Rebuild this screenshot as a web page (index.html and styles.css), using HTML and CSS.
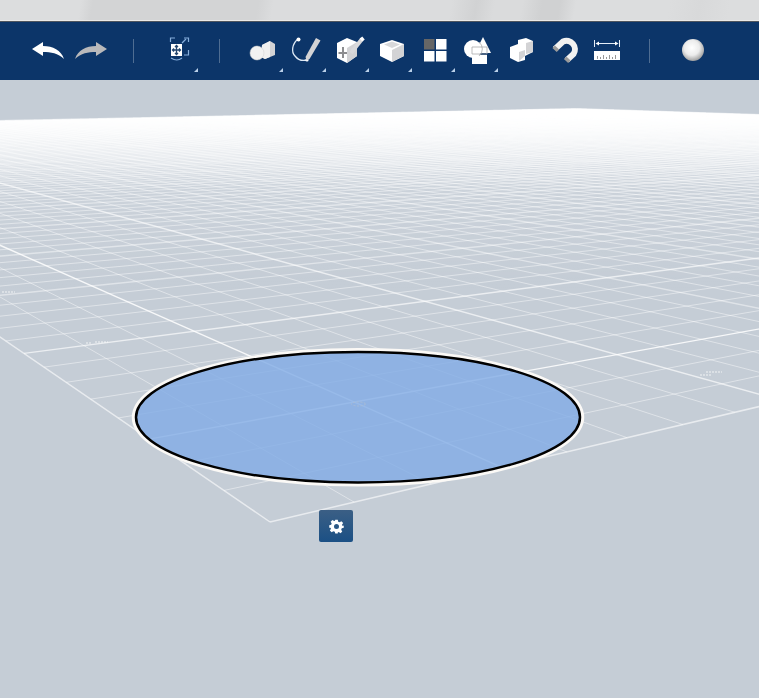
FILE: index.html
```html
<!DOCTYPE html>
<html lang="en">
<head>
<meta charset="utf-8">
<title>3D workspace</title>
<link rel="stylesheet" href="styles.css">
</head>
<body>
<div class="app">
  <div class="strip"></div>
  <div class="toolbar">
    <div class="btn"><svg class="ico" viewBox="27 33 43 36"><path class="w" d="M32 49 L43 42 V46 C53 46 61 50 64 59 C58 53 51 52 43 52 V56 Z"/></svg></div>
    <div class="btn"><svg class="ico" viewBox="70 33 43 36"><path class="g" d="M107 49 L96 42 V46 C86 46 78 50 75 59 C81 53 88 52 96 52 V56 Z"/></svg></div>
    <div class="sep first"></div>
    <div class="btn caret"><svg class="ico" viewBox="157 33 43 36">
      <path class="lb" d="M170.5 42 V38 H175 M184 38 H188.5 V42 M188.5 50 V55 H184"/>
      <path class="lb" d="M171 58 Q177 62 182 58"/>
      <path class="lb" d="M182 43 L186 39"/>
      <rect class="w" x="171" y="44" width="11" height="12"/>
      <path class="dk" d="M176.5 45.5 V54.5 M172.5 50 H180.5 M175 47 L176.5 45.5 L178 47 M175 53 L176.5 54.5 L178 53 M174 48.5 L172.5 50 L174 51.5 M179 48.5 L180.5 50 L179 51.5"/>
    </svg></div>
    <div class="sep second"></div>
    <div class="btn caret"><svg class="ico" viewBox="242 33 43 36">
      <path class="gf" d="M262 45 L270 41 L275 44 V55 L265 59 L261 57 Z"/>
      <path class="w2" d="M262 45 L270 41 L270 57 L265 59 L261 57 Z"/>
      <circle class="sph" cx="257" cy="53" r="7"/>
    </svg></div>
    <div class="btn caret"><svg class="ico" viewBox="285 33 43 36">
      <path class="cv" d="M298 39 C292 44 291 52 295 56 C298 60 303 61 307 60"/>
      <circle class="w" cx="298.5" cy="39.5" r="2"/>
      <circle class="w" cx="307" cy="60" r="1.6"/>
      <path class="gf" d="M316 38 L320.5 40.5 L309.5 59 L306.5 60.5 L305.5 57 Z"/>
    </svg></div>
    <div class="btn caret"><svg class="ico" viewBox="328 33 43 36">
      <path class="w" d="M337 43 L347 38 L357 42 V56 L347 63 L337 58 Z"/>
      <path class="gf" d="M347 48 L357 42 V56 L347 63 Z"/>
      <path class="pl" d="M343 47 V58 M338.5 53 H347"/>
      <path class="pen" d="M351 53 L362 39"/>
      <path class="pent" d="M361 40 L363.500 38"/>
    </svg></div>
    <div class="btn caret"><svg class="ico" viewBox="371 33 43 36">
      <path class="w" d="M380 44 L392 40 L404 44 V56 L392 62 L380 56 Z"/>
      <path class="gf" d="M392 50 L404 44 V56 L392 62 Z"/>
      <path class="top" d="M384 44.500 L392 41.500 L400 44.500 L392 48 Z"/>
    </svg></div>
    <div class="btn caret"><svg class="ico" viewBox="414 33 43 36">
      <rect class="dg" x="424" y="39" width="10.500" height="10.500"/>
      <rect class="w" x="436" y="39" width="10.500" height="10.500"/>
      <rect class="w" x="424" y="51" width="10.500" height="10.500"/>
      <rect class="w" x="436" y="51" width="10.500" height="10.500"/>
    </svg></div>
    <div class="btn caret"><svg class="ico" viewBox="457 33 43 36">
      <circle class="w" cx="473" cy="49" r="9"/>
      <path class="w" d="M483 37 L491 53 H475 Z"/>
      <rect class="w" x="472" y="55" width="15" height="9"/>
      <path class="ov" d="M472 47 H487 V54 H472 Z M479 42 A9 9 0 0 1 479 56"/>
    </svg></div>
    <div class="btn"><svg class="ico" viewBox="500 33 43 36">
      <path class="w" d="M510 47 L518 44 V40 L526 38 L533 41 V52 L525 56 V60 L518 62 L510 58 Z"/>
      <path class="gf" d="M526 43 L533 41 V52 L526 54 Z M519 52 L525 50 V56 L519 61 Z"/>
    </svg></div>
    <div class="btn"><svg class="ico" viewBox="543 33 43 36">
      <path class="mg" d="M555 49 L563 41.500 A8.500 8.500 0 0 1 573.500 54 L567 60"/>
      <path class="mt" d="M554.500 50 L557 47.500 M566 61 L568.500 58.500"/>
    </svg></div>
    <div class="btn"><svg class="ico" viewBox="586 33 43 36">
      <path class="rl" d="M594.500 40 V47 M619.500 40 V47 M597 43.500 H617"/>
      <path class="w" d="M599 41.500 L595.500 43.500 L599 45.500 Z M615 41.500 L618.500 43.500 L615 45.500 Z"/>
      <rect class="w" x="594" y="51" width="26" height="9"/>
      <path class="tk" d="M597.500 59 V56 M600.500 59 V57 M603.500 59 V55 M606.500 59 V57 M609.500 59 V55 M612.500 59 V57 M615.500 59 V55"/>
    </svg></div>
    <div class="sep third"></div>
    <div class="btn"><svg class="ico" viewBox="672 33 43 36">
      <defs><radialGradient id="ball" cx="0.45" cy="0.4" r="0.62"><stop offset="0" stop-color="#ffffff"/><stop offset="0.55" stop-color="#ececec"/><stop offset="1" stop-color="#9a9a9a"/></radialGradient></defs>
      <circle cx="693" cy="50" r="11" fill="url(#ball)"/>
    </svg></div>
  </div>
  <div class="stage">
    <svg class="scene" id="scene" viewBox="0 80 759 618">
      <defs>
        <linearGradient id="haze" x1="0" y1="109" x2="0" y2="290" gradientUnits="userSpaceOnUse">
          <stop offset="0" stop-color="#ffffff" stop-opacity="1"/>
          <stop offset="0.1" stop-color="#ffffff" stop-opacity="0.75"/>
          <stop offset="0.45" stop-color="#ffffff" stop-opacity="0.12"/>
          <stop offset="1" stop-color="#ffffff" stop-opacity="0"/>
        </linearGradient>
      </defs>
      <g id="plate"></g>
      <g class="labels">
        <path d="M2 292 H15 M86 343 H92 M95 342 H108 M700 375 H712 M706 372 H722"/>
      </g>
      <g class="disc">
        <ellipse class="halo" cx="358" cy="417.250" rx="224.500" ry="67.500"/>
        <ellipse class="fill" cx="358" cy="417.250" rx="222" ry="65.250"/>
        <ellipse class="mark" cx="358.500" cy="404" rx="7" ry="2"/>
      </g>
    </svg>
    <div class="gear-btn">
      <svg class="gear" viewBox="0 0 24 24"><path d="M10 1 H14 L14.700 4.200 L17 5.200 L19.800 3.400 L22.600 6.200 L20.800 9 L21.800 11.300 L23.600 10.500 V14 L20.400 14.700 L19.500 17 L21.200 19.800 L18.400 22.600 L15.600 20.800 L14 21.500 L14 23 H10 L9.300 20.300 L7 19.400 L4.200 21.200 L1.400 18.400 L3.200 15.600 L2.300 14 H0.400 V10 L3.400 9.300 L4.300 7 L2.600 4.200 L5.400 1.400 L8.200 3.200 L9.500 2.600 Z M12 8 A4 4 0 1 0 12 16 A4 4 0 1 0 12 8 Z"/></svg>
    </div>
  </div>
</div>
<script src="grid.js"></script>
</body>
</html>
```
FILE: styles.css
```css
* { box-sizing: border-box; }
html, body { margin: 0; height: 100%; overflow: hidden; background: #c5cdd6; font-family: "Liberation Sans", sans-serif; }
.app { display: flex; flex-direction: column; height: 698px; }

.strip {
  height: 22px;
  flex: none;
  border-bottom: 1px solid #50565f;
  box-shadow: inset 0 -1px 0 #ece9e7;
  background:
    linear-gradient(100deg, #dcddde 0 80px, #d3d4d5 92px 255px, #dbdcdd 270px 445px, #d1d2d3 470px, #dadbdc 488px 515px, #d0d1d2 535px 552px, #dcddde 568px 660px, #d8d9da 690px, #dcddde 720px);
}
.toolbar {
  height: 58px;
  flex: none;
  display: flex;
  align-items: center;
  padding-left: 27px;
  background: #0c3569;
}
.btn { position: relative; width: 43px; height: 36px; flex: none; }
.ico { display: block; width: 43px; height: 36px; filter: blur(.3px); }
.caret::after {
  content: "";
  position: absolute;
  right: 2px;
  bottom: -3px;
  border-style: solid;
  border-width: 0 0 4px 4px;
  border-color: transparent transparent #b9cfe8 transparent;
}
.sep { width: 1px; height: 24px; flex: none; background: rgba(255,255,255,.28); }
.sep.first { margin: 0 23px 0 20px; }
.sep.second { margin: 0 22px 0 19px; }
.sep.third { margin: 0 22px 0 20px; }

.w { fill: #ffffff; }
.g { fill: #b9b9bb; }
.gf { fill: #d3d3d5; }
.w2 { fill: #f0f0f0; }
.sph { fill: #f2f2f2; stroke: #cfcfcf; stroke-width: .5; }
.dg { fill: #666666; }
.top { fill: #d8d8da; }
.lb { fill: none; stroke: #86aedb; stroke-width: 1.2; }
.dk { fill: none; stroke: #24466f; stroke-width: 1.300; }
.cv { fill: none; stroke: #dce8f5; stroke-width: 1.300; }
.pl { fill: none; stroke: #8d8d8f; stroke-width: 2; }
.pen { fill: none; stroke: #d9d9db; stroke-width: 4; }
.pent { fill: none; stroke: #ffffff; stroke-width: 4; }
.ov { fill: none; stroke: #a9a9ab; stroke-width: .8; }
.mg { fill: none; stroke: #f2f2f2; stroke-width: 6; }
.mt { fill: none; stroke: #9a9a9a; stroke-width: 6; }
.rl { fill: none; stroke: #e6eef8; stroke-width: 1; }
.tk { fill: none; stroke: #7d7d7d; stroke-width: .8; }

.stage { position: relative; flex: 1; background: #c5cdd6; }
.scene { position: absolute; left: 0; top: 0; width: 759px; height: 618px; display: block; }

#plate { filter: blur(.35px); }
.grid-haze { stroke: none; }
.minor { stroke: #ffffff; stroke-opacity: .44; stroke-width: 1; fill: none; }
.major { stroke: #ffffff; stroke-width: 1.400; fill: none; }
.edge { stroke: #ffffff; stroke-opacity: .6; stroke-width: 1.500; fill: none; }

.halo { fill: none; stroke: #fbf9f6; stroke-width: 3.500; }
.fill { fill: #83ace5; fill-opacity: .82; stroke: #000000; stroke-width: 2.500; }
.mark { fill: none; stroke: #a9bcd6; stroke-width: 1; stroke-dasharray: 2 1.500; }
.labels path { fill: none; stroke: #ffffff; stroke-opacity: .5; stroke-width: 1.500; stroke-dasharray: 2 1; filter: blur(.4px); }

.gear-btn {
  position: absolute;
  left: 319px;
  top: 430px;
  width: 34px;
  height: 32px;
  display: flex;
  align-items: center;
  justify-content: center;
  border-radius: 2px;
  background: linear-gradient(#3b5f85, #1b5085);
}
.gear { width: 15px; height: 15px; fill: #ffffff; fill-rule: evenodd; }
```
FILE: grid.js
```js
(function () {
  var NS = "http://www.w3.org/2000/svg";
  var F = [270, 522], VU = [2160, 76], VV = [-378, 78];
  var AU = 0.0466, AV = 0.0765, NU = 108, NV = 105;
  var plate = document.getElementById("plate");

  function project(u, v) {
    var a = u * AU, b = v * AV, d = 1 + a + b;
    return [(F[0] + a * VU[0] + b * VV[0]) / d, (F[1] + a * VU[1] + b * VV[1]) / d];
  }
  function add(i, last, p, q) {
    var l = document.createElementNS(NS, "line");
    var isEdge = i === 0 || i === last;
    var isMajor = !isEdge && (i - 3) % 5 === 0;
    l.setAttribute("class", isEdge ? "edge" : isMajor ? "major" : "minor");
    l.setAttribute("x1", p[0].toFixed(2));
    l.setAttribute("y1", p[1].toFixed(2));
    l.setAttribute("x2", q[0].toFixed(2));
    l.setAttribute("y2", q[1].toFixed(2));
    if (isMajor) l.style.strokeOpacity = Math.max(0.45, 0.85 - 0.04 * (i - 3)).toFixed(2);
    plate.appendChild(l);
  }
  var haze = document.createElementNS(NS, "polygon");
  haze.setAttribute("class", "grid-haze");
  haze.setAttribute("fill", "url(#haze)");
  haze.setAttribute("points", [project(0, 0), project(NU, 0), project(NU, NV), project(0, NV)]
    .map(function (p) { return p[0].toFixed(1) + "," + p[1].toFixed(1); }).join(" "));
  plate.appendChild(haze);
  var i;
  for (i = 0; i <= NU; i++) add(i, NU, project(i, 0), project(i, NV));
  for (i = 0; i <= NV; i++) add(i, NV, project(0, i), project(NU, i));
})();
```
